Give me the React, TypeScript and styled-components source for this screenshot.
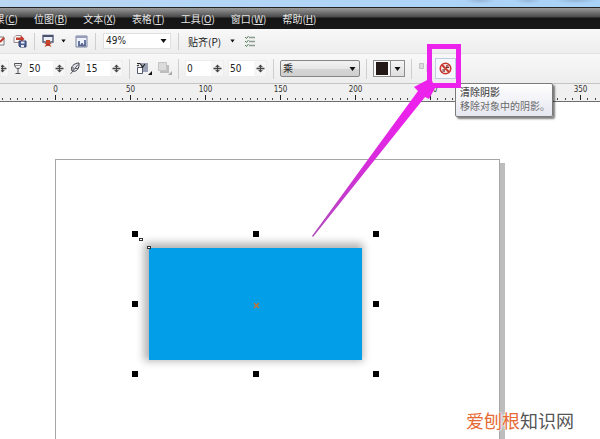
import React from "react";
import styled, { createGlobalStyle, css } from "styled-components";

const uiFont = '"DejaVu Sans Condensed", "Noto Sans", "Noto Sans CJK SC", sans-serif';
const cjkFont = '"Noto Sans CJK SC", "Noto Sans", sans-serif';
const magenta = "#ec22ec";

const GlobalStyle = createGlobalStyle`
  *, *::before, *::after { box-sizing: border-box; }
  body { margin: 0; overflow: hidden; background: #fff; font-family: ${cjkFont}; }
  button, input, select { font: inherit; color: inherit; margin: 0; }
`;

const Window = styled.div`
  display: flex;
  flex-direction: column;
  height: 100vh;
  color: #222;
  font-size: 10px;
`;

const TitleStrip = styled.header`
  flex: none;
  height: 7px;
  background:
    radial-gradient(ellipse 16px 4px at 80% 0, #93b4d6, transparent),
    radial-gradient(ellipse 14px 4px at 88% 0, #93b4d6, transparent),
    radial-gradient(ellipse 22px 4px at 96% 0, #93b4d6, transparent),
    linear-gradient(90deg, #b9d7f3, #a9d2f8);
`;

const MenuBar = styled.nav`
  flex: none;
  display: flex;
  align-items: center;
  gap: 16px;
  height: 22px;
  overflow: hidden;
  border-top: 1px solid #222;
  background: linear-gradient(#9a9a9a 0, #494949 9px, #141414 10px, #191919 100%);
`;

const MenuButton = styled.button<{ $clipped?: boolean }>`
  flex: none;
  display: flex;
  ${(p) => p.$clipped && css`
    width: 18px;
    justify-content: flex-end;
  `}
  padding: 0;
  border: 0;
  background: none;
  color: #e4e4e4;
  line-height: 16px;
  white-space: nowrap;
`;

const Toolbar = styled.div<{ $kind: "standard" | "property" }>`
  flex: none;
  display: flex;
  align-items: center;
  background: linear-gradient(#f8f8f8, #ededed);
  ${(p) =>
    p.$kind === "standard"
      ? css`height: 25px; gap: 7px; border-bottom: 1px solid #e2e2e2;`
      : css`height: 30px; gap: 4px; border-bottom: 1px solid #c4c4c4;`}
`;

const Separator = styled.span<{ $tall?: boolean }>`
  flex: none;
  width: 1px;
  height: ${(p) => (p.$tall ? 20 : 17)}px;
  margin: 0 ${(p) => (p.$tall ? 2 : 0)}px;
  background: #cfcfcf;
`;

const IconButton = styled.button<{ $w: number }>`
  flex: none;
  display: flex;
  align-items: center;
  justify-content: flex-start;
  width: ${(p) => p.$w}px;
  height: 18px;
  padding: 0;
  border: 0;
  background: none;
`;

const TextButton = styled.button`
  flex: none;
  padding: 0 2px;
  border: 0;
  background: none;
  white-space: nowrap;
`;

const ZoomBox = styled.label`
  flex: none;
  display: grid;
  align-items: center;
  width: 68px;
  height: 16px;
  background: #fff;
  border: 1px solid #e0e0e0;
  & > * { grid-area: 1 / 1; }
  & > svg { justify-self: end; margin-right: 3px; pointer-events: none; }
`;

const BlendBox = styled(ZoomBox)`
  width: 80px;
  height: 17px;
  border: 1px solid #858585;
  border-radius: 2px;
  background: linear-gradient(#f2f2f2, #e6e6e6 50%, #d6d6d6 51%, #cfcfcf);
`;

const Select = styled.select`
  appearance: none;
  width: 100%;
  height: 14px;
  padding: 0 2px;
  border: 0;
  outline: 0;
  background: none;
  font-family: ${uiFont};
  line-height: 14px;
`;

const Spinner = styled.span<{ $clipped?: boolean }>`
  flex: none;
  display: flex;
  align-items: center;
  justify-content: flex-end;
  width: ${(p) => (p.$clipped ? 9 : 39)}px;
  height: 17px;
  overflow: hidden;
  background: #fff;
  border: 1px solid #ededed;
`;

const NumberInput = styled.input`
  flex: 1;
  min-width: 0;
  height: 15px;
  padding: 0 1px;
  border: 0;
  outline: 0;
  background: none;
  font-family: ${uiFont};
`;

const SpinButton = styled.button`
  flex: none;
  display: grid;
  place-items: center;
  width: 12px;
  height: 15px;
  padding: 0;
  border: 0;
  background: #f6f6f6;
`;

const ColourPicker = styled.button`
  flex: none;
  display: flex;
  width: 32px;
  height: 17px;
  padding: 0;
  border: 1px solid #8d8d8d;
  background: #fafafa;
`;

const Swatch = styled.span`
  flex: 1;
  margin: 1px 2px;
  background: #231815;
`;

const PickerArrow = styled.span`
  display: grid;
  place-items: center;
  width: 14px;
  border-left: 1px solid #8d8d8d;
  background: linear-gradient(#f6f6f6, #dedede);
`;

const ClearShadow = styled.div`
  flex: none;
  position: relative;
  z-index: 2;
`;

const ClearButton = styled.button`
  display: grid;
  place-items: center;
  width: 21px;
  height: 21px;
  padding: 0;
  border: 1px solid #bccfe2;
  background: #f6f8fb;
`;

const Tooltip = styled.div`
  position: absolute;
  left: 20px;
  top: 25px;
  width: 98px;
  padding: 1px 4px 3px;
  border: 1px solid #7b7b7b;
  border-radius: 2px;
  background: linear-gradient(#fff, #e5e6f0);
  box-shadow: 2px 2px 2px rgba(0, 0, 0, 0.5);
  color: #6a6a6a;
  line-height: 14px;
  white-space: nowrap;
`;

const TooltipTitle = styled.strong`
  display: block;
  color: #505050;
  font-weight: 500;
`;

const Highlight = styled.span`
  position: absolute;
  inset: -14px -5px -9px -8px;
  border: 5px solid ${magenta};
  pointer-events: none;
`;

const Pointer = styled.svg`
  position: absolute;
  left: -123px;
  top: 20px;
  pointer-events: none;
`;

const Ruler = styled.div`
  flex: none;
  display: flex;
  flex-direction: column;
  justify-content: space-between;
  height: 18px;
  overflow: hidden;
  background: #f0f0f0;
  border-bottom: 1px solid #6f6f6f;
`;

const RulerLabels = styled.div`
  display: flex;
  padding-left: 18px;
  font: 8px/11px ${uiFont};
  color: #333;
`;

const RulerLabel = styled.span`
  flex: none;
  width: 75px;
  text-align: center;
`;

const Ticks = styled.svg`
  display: block;
  flex: none;
  width: 100%;
  height: 6px;
`;

const Canvas = styled.main`
  position: relative;
  flex: 1;
  min-height: 0;
  display: flex;
  padding: 57px 100px 0 55px;
  overflow: hidden;
  background: #fff;
`;

const Page = styled.section`
  position: relative;
  flex: 1;
  border: 1px solid #a6a6a6;
  border-bottom: 0;
  box-shadow: 5px 4px 0 #bdbdbd;
  background: #fff;
`;

const Selection = styled.div`
  position: absolute;
  left: 79px;
  top: 74px;
  width: 241px;
  height: 140px;
`;

const BlueRectangle = styled.div`
  position: absolute;
  left: 14px;
  top: 14px;
  width: 213px;
  height: 112px;
  background: #029fe8;
  box-shadow: -2px -2px 8px 3px rgba(0, 0, 0, 0.3);
`;

const Handle = styled.span<{ $x: number; $y: number }>`
  position: absolute;
  left: ${(p) => p.$x}%;
  top: ${(p) => p.$y}%;
  width: 6px;
  height: 6px;
  margin: -3px;
  background: #000;
`;

const Node = styled.span<{ $x: number; $y: number }>`
  position: absolute;
  left: ${(p) => p.$x}px;
  top: ${(p) => p.$y}px;
  width: 4px;
  height: 3px;
  border: 1px solid #333;
  background: #fff;
`;

const Centre = styled.svg`
  position: absolute;
  left: 118px;
  top: 68px;
`;

const Watermark = styled.div`
  position: absolute;
  right: 26px;
  bottom: 7px;
  color: #555;
  font-size: 18px;
  line-height: 24px;
  text-shadow: 0 0 2px #fff, 0 0 2px #fff, 0 0 3px #fff;
`;

const WatermarkAccent = styled.span`
  color: #e56a35;
`;

const Caret = ({ w = 7 }: { w?: number }) => (
  <svg width={w} height="4" viewBox="0 0 7 4" aria-hidden="true">
    <path d="M0.5 0h6L3.5 4z" fill="#111" />
  </svg>
);

const SpinIcon = () => (
  <svg width="9" height="11" viewBox="0 0 9 11" aria-hidden="true">
    <path d="M0.500 5.500h8" stroke="#444" strokeWidth="1.600" />
    <path d="M2 4L4.500 1.500 7 4zM2 7l2.500 2.500L7 7z" fill="#555" />
    <path d="M4.500 2v7" stroke="#444" />
  </svg>
);

const ImportIcon = () => (
  <svg width="6" height="12" viewBox="0 0 6 12" aria-hidden="true">
    <path d="M0 2h4v8H0" fill="#fff" stroke="#777" />
    <path d="M0 7l4-4" stroke="#c43a2c" strokeWidth="2" />
  </svg>
);

const ExportIcon = () => (
  <svg width="14" height="14" viewBox="0 0 14 14" aria-hidden="true">
    <path d="M1 3.500l2-2h5v7H1z" fill="#f6f6f6" stroke="#9a8a8a" />
    <path d="M3 6V3.500h5V1.500L11.500 5 8 8V6z" fill="#c33b2d" />
    <path d="M6 7h7v6H7l-1-1z" fill="#4d5f91" stroke="#33416c" />
    <path d="M8 7.500h3.500v2H8zM8 11h3v2H8z" fill="#e6e9f5" />
  </svg>
);

const LaunchIcon = () => (
  <svg width="12" height="14" viewBox="0 0 12 14" aria-hidden="true">
    <path d="M1 1.500h10v6.500H1z" fill="#eef0f8" stroke="#555b78" strokeWidth="1.400" />
    <path d="M1 2h10" stroke="#4a5070" strokeWidth="2" />
    <path d="M4 6h4v3h2L6 12 2 9h2z" fill="#c8452a" />
    <path d="M2.500 13l2-3h3l2 3-3.500-1.500z" fill="#b23725" />
  </svg>
);

const WelcomeIcon = () => (
  <svg width="13" height="13" viewBox="0 0 13 13" aria-hidden="true">
    <path d="M1 1h11v11H1z" fill="#edf1fa" stroke="#7b83a0" />
    <path d="M1 2h11" stroke="#969db9" strokeWidth="2" />
    <path d="M3 6h2v5H3zM6 8h2v3H6zM9 5h2v6H9z" fill="#68769f" />
    <path d="M3 10.500h8" stroke="#59668e" strokeWidth="2" />
  </svg>
);

const OptionsIcon = () => (
  <svg width="12" height="13" viewBox="0 0 12 13" aria-hidden="true" fill="none">
    <path d="M5 2.500h6M5 6.500h6M5 10.500h6" stroke="#8b9b8e" strokeWidth="1.400" />
    <path d="M1 2l1.500 1.500L4.500 1M1 6l1.500 1.500L4.500 5M1 10l1.500 1.500L4.500 9" stroke="#4b7753" />
  </svg>
);

const OpacityIcon = () => (
  <svg width="10" height="13" viewBox="0 0 10 13" aria-hidden="true" fill="none" stroke="#505058">
    <path d="M1.500 1.500h7c0 3-1 5-3.500 5s-3.500-2-3.500-5zM5 6.500V11M2.500 11.500h5" />
    <path d="M2 3.500h6" stroke="#999" />
  </svg>
);

const FeatherIcon = () => (
  <svg width="10" height="13" viewBox="0 0 10 13" aria-hidden="true" fill="none" stroke="#3e3e46">
    <path d="M2 9C0 5 4 1 9 1c.5 5-2 9.500-7 8z" fill="#e3e4ea" />
    <path d="M0.500 12L8 2.500M3 8V5M5 6.500h3" strokeWidth=".8" />
  </svg>
);

const DirectionIcon = () => (
  <svg width="17" height="15" viewBox="0 0 17 15" aria-hidden="true">
    <path d="M5 2h7v9H5z" fill="#9aa1b5" />
    <path d="M1.500 6.500h5v6h-5z" fill="#fff" stroke="#52596f" />
    <path d="M1 2.500h3l3 4M3 4l-2 1M9 3L6 7" stroke="#222" fill="none" strokeWidth="1.200" />
    <path d="M16 10v4h-4z" fill="#111" />
  </svg>
);

const ShadowColourIcon = () => (
  <svg width="15" height="15" viewBox="0 0 15 15" aria-hidden="true">
    <path d="M3 4h9v8H3z" fill="#bdbdbd" />
    <path d="M1.500 1.500h8v8h-8z" fill="#dcdcdc" stroke="#c4c4c4" />
    <path d="M15 10v4h-4z" fill="#aaa" />
  </svg>
);

const CopyIcon = () => (
  <svg width="13" height="14" viewBox="0 0 13 14" aria-hidden="true">
    <path d="M1.500 1.500h4v5h-4z" fill="#ddd" stroke="#c2c2c2" />
    <path d="M8 2h3v8H8z" fill="#ddd" />
  </svg>
);

const ClearIcon = () => (
  <svg width="13" height="13" viewBox="0 0 13 13" aria-hidden="true">
    <circle cx="6.500" cy="6.500" r="5.300" fill="#f7e9e7" />
    <path d="M7 3h3v3H7zM3 7h3v3H3z" fill="#b7a3a3" />
    <path d="M8 3v3M5 10l0-3M7 5.500h3" stroke="#8a3530" />
    <circle cx="6.500" cy="6.500" r="5.300" fill="none" stroke="#c9382f" strokeWidth="1.500" />
    <path d="M3 3l7 7" stroke="#c9382f" strokeWidth="2" />
  </svg>
);

const menus: [string, string][] = [
  ["位图", "B"],
  ["文本", "X"],
  ["表格", "T"],
  ["工具", "O"],
  ["窗口", "W"],
  ["帮助", "H"],
];

const minorTicks = [7, 15, 22, 30, 37, 45, 52, 60, 67];
const handles = [
  [0, 0], [50, 0], [100, 0],
  [0, 50], [100, 50],
  [0, 100], [50, 100], [100, 100],
];

function SpinField({ label, value }: { label: string; value: string }) {
  return (
    <Spinner>
      <NumberInput aria-label={label} defaultValue={value} inputMode="numeric" />
      <SpinButton aria-label={`${label} 调整`}><SpinIcon /></SpinButton>
    </Spinner>
  );
}

export default function App() {
  return (
    <Window>
      <GlobalStyle />
      <TitleStrip />
      <MenuBar>
        <MenuButton $clipped>果(<u>C</u>)</MenuButton>
        {menus.map(([name, key]) => (
          <MenuButton key={key}>{name}(<u>{key}</u>)</MenuButton>
        ))}
      </MenuBar>

      <Toolbar $kind="standard">
        <IconButton $w={6} aria-label="导入"><ImportIcon /></IconButton>
        <IconButton $w={14} aria-label="导出"><ExportIcon /></IconButton>
        <Separator />
        <IconButton $w={12} aria-label="应用程序启动器"><LaunchIcon /></IconButton>
        <IconButton $w={7} aria-label="启动器选项"><Caret w={5} /></IconButton>
        <IconButton $w={13} aria-label="欢迎屏幕"><WelcomeIcon /></IconButton>
        <Separator />
        <ZoomBox>
          <Select aria-label="缩放级别"><option>49%</option></Select>
          <Caret />
        </ZoomBox>
        <Separator />
        <TextButton>贴齐(P)</TextButton>
        <IconButton $w={7} aria-label="贴齐选项"><Caret w={5} /></IconButton>
        <IconButton $w={12} aria-label="选项"><OptionsIcon /></IconButton>
      </Toolbar>

      <Toolbar $kind="property">
        <Spinner $clipped><SpinButton aria-label="角度调整"><SpinIcon /></SpinButton></Spinner>
        <OpacityIcon />
        <SpinField label="阴影的不透明" value="50" />
        <FeatherIcon />
        <SpinField label="阴影羽化" value="15" />
        <Separator $tall />
        <IconButton $w={17} aria-label="羽化方向"><DirectionIcon /></IconButton>
        <IconButton $w={15} aria-label="羽化边缘" disabled><ShadowColourIcon /></IconButton>
        <Separator $tall />
        <SpinField label="阴影淡出" value="0" />
        <SpinField label="阴影延展" value="50" />
        <Separator $tall />
        <BlendBox>
          <Select aria-label="合并模式"><option>乘</option></Select>
          <Caret />
        </BlendBox>
        <Separator $tall />
        <ColourPicker aria-label="阴影颜色">
          <Swatch />
          <PickerArrow><Caret /></PickerArrow>
        </ColourPicker>
        <Separator $tall />
        <IconButton $w={13} aria-label="复制阴影属性" disabled><CopyIcon /></IconButton>
        <ClearShadow>
          <ClearButton aria-labelledby="clear-title"><ClearIcon /></ClearButton>
          <Tooltip role="tooltip">
            <TooltipTitle id="clear-title">清除阴影</TooltipTitle>
            移除对象中的阴影。
          </Tooltip>
          <Highlight />
          <Pointer width="125" height="160" viewBox="0 0 125 160" aria-hidden="true">
            <defs>
              <linearGradient id="tail" x1="0" y1="1" x2="1" y2="0">
                <stop offset="0" stopColor="#b14bbd" />
                <stop offset=".5" stopColor="#d92bdc" />
                <stop offset=".8" stopColor={magenta} />
              </linearGradient>
            </defs>
            <path d="M0 158L106 13 102 9 119 0 123 10 117 21 113 19 1 159z" fill="url(#tail)" />
          </Pointer>
        </ClearShadow>
      </Toolbar>

      <Ruler>
        <RulerLabels>
          {[0, 50, 100, 150, 200, 250, 300, 350].map((n) => (
            <RulerLabel key={n}>{n}</RulerLabel>
          ))}
        </RulerLabels>
        <Ticks aria-hidden="true">
          <defs>
            <pattern id="ticks" x="55" width="75" height="6" patternUnits="userSpaceOnUse">
              <rect width="1" height="5" fill="#222" />
              {minorTicks.map((x) => (
                <rect key={x} x={x} y="3" width="1" height="2" fill="#444" />
              ))}
            </pattern>
          </defs>
          <rect width="100%" height="6" fill="url(#ticks)" />
        </Ticks>
      </Ruler>

      <Canvas>
        <Page>
          <Selection>
            <BlueRectangle />
            {handles.map(([x, y]) => (
              <Handle key={`${x}-${y}`} $x={x} $y={y} />
            ))}
            <Node $x={4} $y={4} />
            <Node $x={12} $y={12} />
            <Centre width="7" height="7" viewBox="0 0 7 7" aria-hidden="true">
              <path d="M1 1l5 5M6 1L1 6" stroke="#b9763f" strokeWidth="1.600" />
            </Centre>
          </Selection>
        </Page>
        <Watermark><WatermarkAccent>爱刨根</WatermarkAccent>知识网</Watermark>
      </Canvas>
    </Window>
  );
}
